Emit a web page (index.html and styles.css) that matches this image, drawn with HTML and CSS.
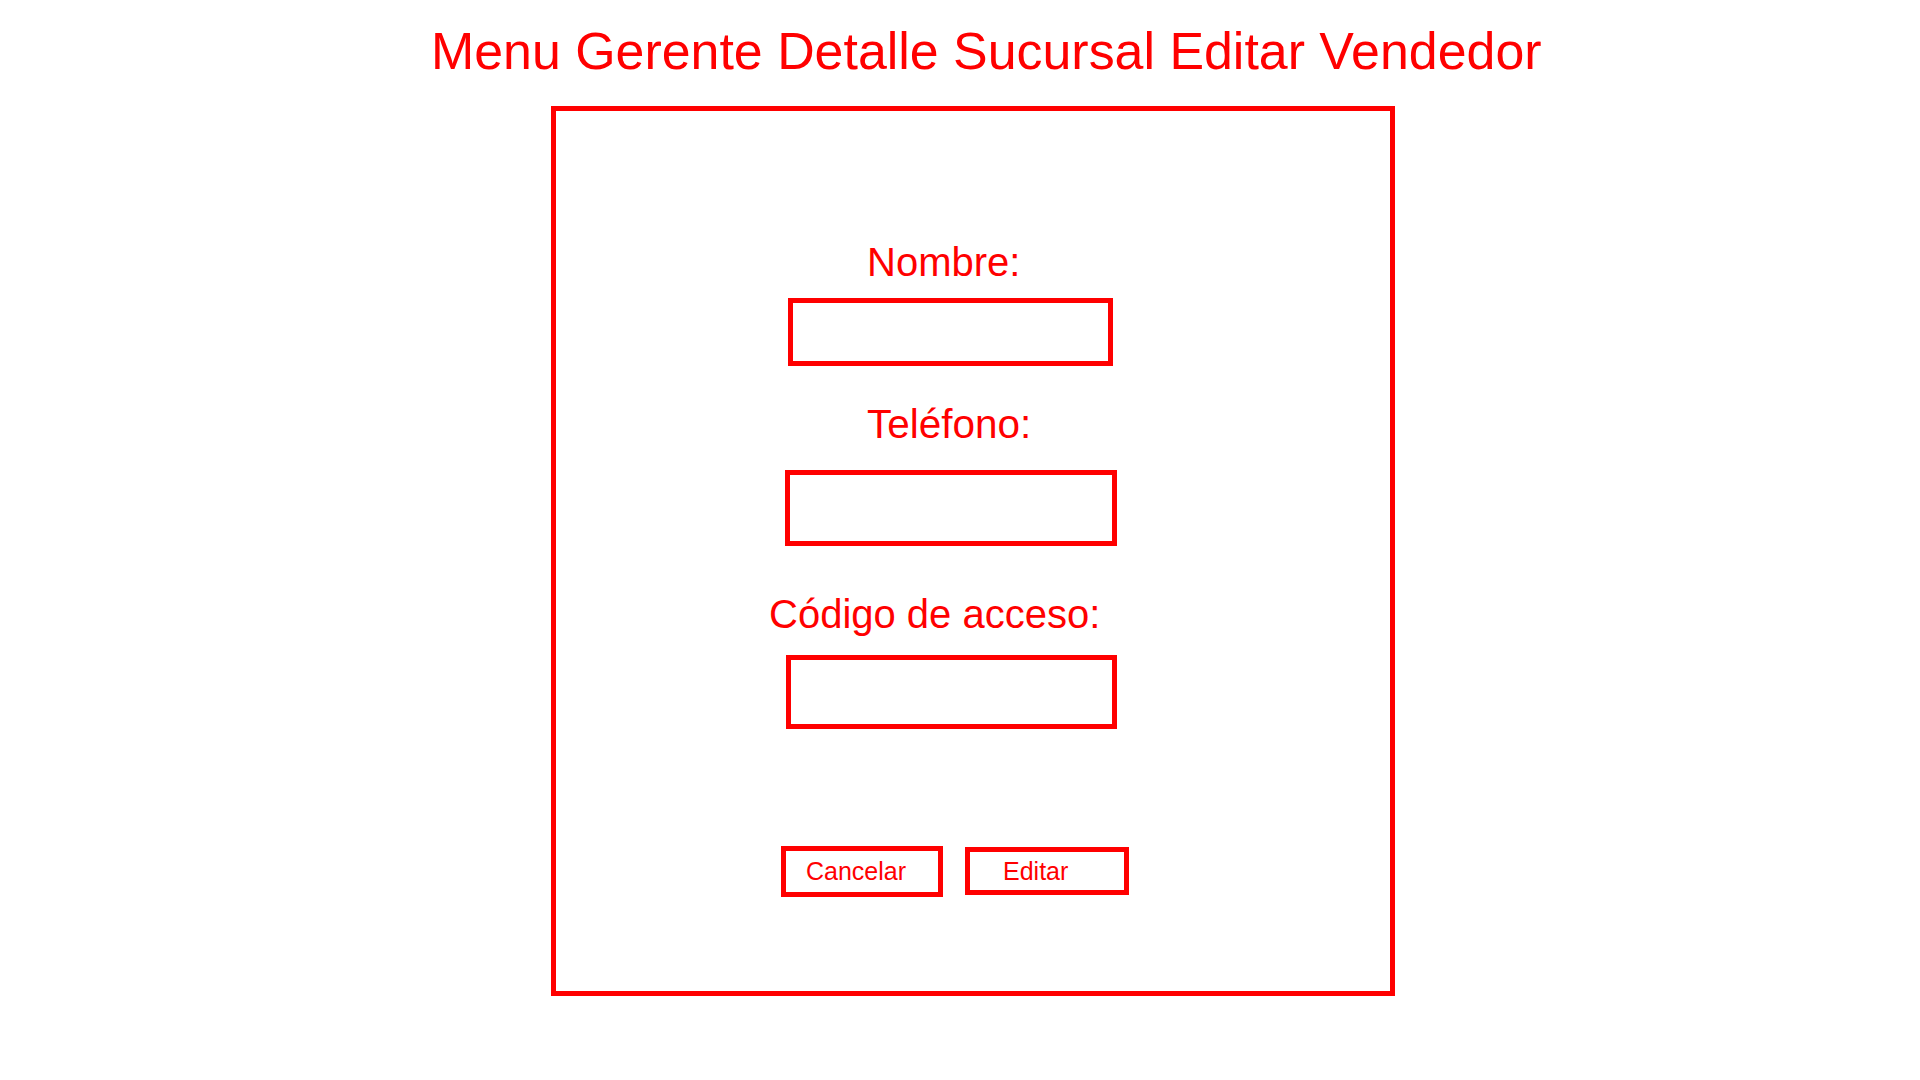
FILE: index.html
```html
<!DOCTYPE html>
<html lang="es">
<head>
<meta charset="utf-8">
<title>Menu Gerente Detalle Sucursal Editar Vendedor</title>
<link rel="stylesheet" href="styles.css">
</head>
<body>
<h1 class="title">Menu Gerente Detalle Sucursal Editar Vendedor</h1>
<div class="panel">
  <div class="form">
    <label class="label label-nombre" for="nombre">Nombre:</label>
    <input class="field field-nombre" id="nombre" type="text">
    <label class="label label-telefono" for="telefono">Teléfono:</label>
    <input class="field field-telefono" id="telefono" type="text">
    <label class="label label-codigo" for="codigo">Código de acceso:</label>
    <input class="field field-codigo" id="codigo" type="text">
    <div class="actions">
      <button class="btn btn-cancel" type="button">Cancelar</button>
      <button class="btn btn-edit" type="button">Editar</button>
    </div>
  </div>
</div>
</body>
</html>
```
FILE: styles.css
```css
html, body {
  margin: 0;
  padding: 0;
  background: #ffffff;
}
body {
  font-family: "Liberation Sans", Arial, sans-serif;
  color: #ff0000;
  width: 1920px;
  height: 1080px;
  overflow: hidden;
}
.title {
  margin: 0;
  padding: 21px 0 0 431px;
  height: 62px;
  box-sizing: border-box;
  font-size: 51.9px;
  font-weight: normal;
  line-height: 60px;
  white-space: nowrap;
}
.panel {
  box-sizing: border-box;
  margin: 44px 0 0 551px;
  width: 844px;
  height: 890px;
  border: 5px solid #ff0000;
}
.title + .panel {
  margin-top: 44px;
}
.form {
  display: flex;
  flex-direction: column;
  align-items: flex-start;
  padding-top: 128px;
}
.label {
  display: block;
  font-size: 40px;
  line-height: 46px;
  white-space: nowrap;
}
.field {
  display: block;
  box-sizing: border-box;
  border: 5px solid #ff0000;
  background: #ffffff;
  padding: 0 8px;
  margin: 0;
  outline: none;
  font-family: "Liberation Sans", Arial, sans-serif;
  font-size: 24px;
  color: #ff0000;
  border-radius: 0;
}
.label-nombre { margin: 0 0 0 311px; }
.field-nombre { margin: 13px 0 0 232px; width: 325px; height: 68px; }
.label-telefono { margin: 35px 0 0 311px; font-size: 40.5px; }
.field-telefono { margin: 23px 0 0 229px; width: 332px; height: 76px; }
.label-codigo { margin: 45px 0 0 213px; }
.field-codigo { margin: 18px 0 0 230px; width: 331px; height: 74px; }
.actions {
  display: flex;
  align-items: flex-start;
  gap: 22px;
  margin: 117px 0 0 225px;
}
.btn {
  box-sizing: border-box;
  margin: 0;
  border: 5px solid #ff0000;
  border-radius: 0;
  background: #ffffff;
  color: #ff0000;
  font-family: "Liberation Sans", Arial, sans-serif;
  font-size: 25px;
  line-height: 27px;
  text-align: left;
  cursor: pointer;
}
.btn-cancel {
  width: 162px;
  height: 51px;
  padding: 0 0 0 20px;
}
.btn-edit {
  width: 164px;
  height: 48px;
  margin-top: 1px;
  padding: 0 0 0 33px;
}
```
